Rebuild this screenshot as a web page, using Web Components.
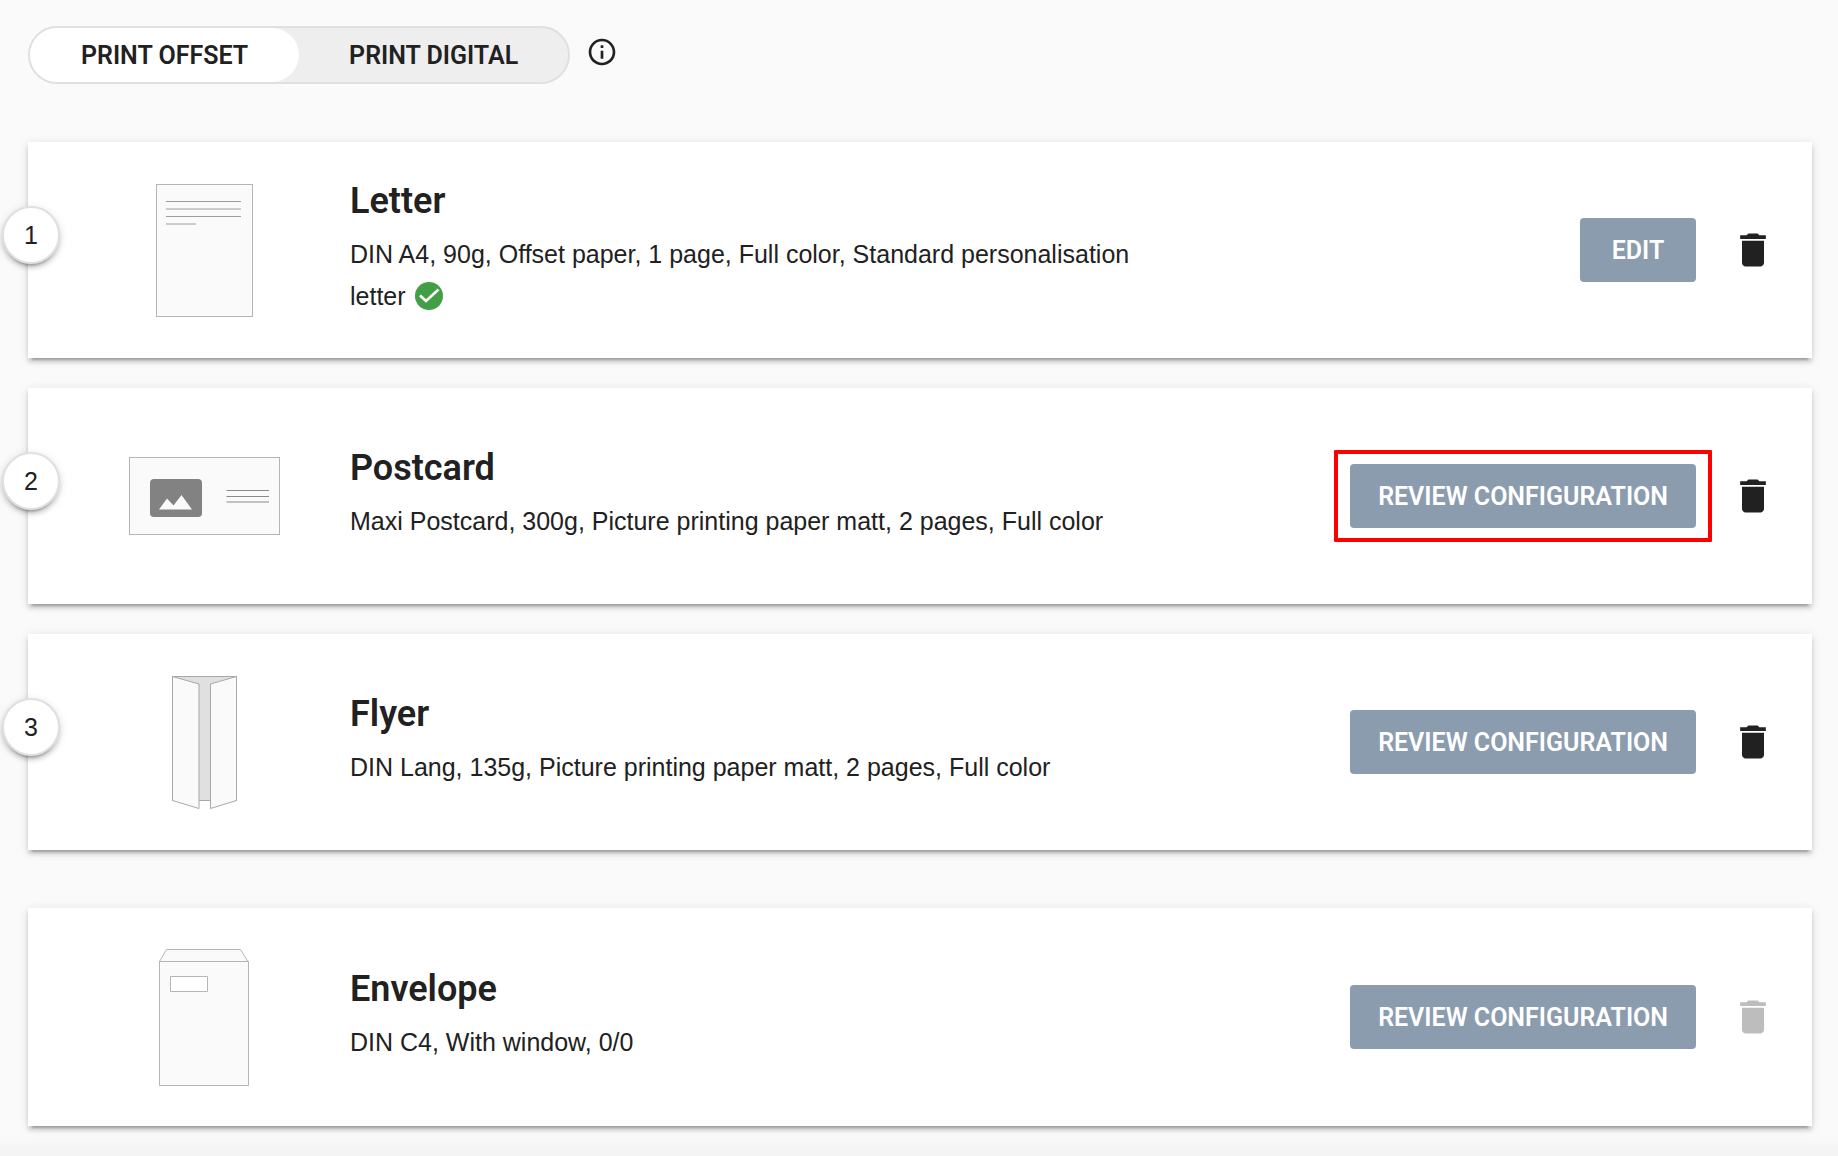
<!DOCTYPE html>
<html lang="en">
	<head>
		<meta charset="utf-8">
		<title>Print products</title>
		<style>
			body {
				margin: 0;
				background: #fafafa;
				color: #212121;
				font-family: "Liberation Sans", Arial, sans-serif;
				font-size: 25px;
			}
		</style>
	</head>
<body>
	<print-page>
		<print-mode slot="header"></print-mode>
		<product-card number="1" kind="letter" action="Edit">
			<span slot="name">Letter</span>
			DIN A4, 90g, Offset paper, 1 page, Full color, Standard personalisation letter <check-mark></check-mark>
		</product-card>
		<product-card number="2" kind="postcard" action="Review configuration" highlight>
			<span slot="name">Postcard</span>
			Maxi Postcard, 300g, Picture printing paper matt, 2 pages, Full color
		</product-card>
		<product-card number="3" kind="flyer" action="Review configuration">
			<span slot="name">Flyer</span>
			DIN Lang, 135g, Picture printing paper matt, 2 pages, Full color
		</product-card>
		<product-card slot="extra" kind="envelope" action="Review configuration" locked>
			<span slot="name">Envelope</span>
			DIN C4, With window, 0/0
		</product-card>
	</print-page>

	<template id="page">
		<style>
			:host {
				display: flex;
				flex-direction: column;
				box-sizing: border-box;
				min-height: 100vh;
			}

			main {
				flex: 1;
				padding: 26px 26px 0 28px;
			}

			.list {
				display: grid;
				gap: 30px;
				margin: 58px 0;
			}

			footer {
				height: 20px;
				background: linear-gradient(#fafafa, #f2f2f2);
			}
		</style>
		<main>
			<slot name="header"></slot>
			<div class="list"><slot></slot></div>
			<slot name="extra"></slot>
		</main>
		<footer></footer>
	</template>

	<template id="mode">
		<style>
			:host {
				display: flex;
				align-items: center;
				gap: 16px;
			}

			.switch {
				display: grid;
				grid-template-columns: 1fr 1fr;
				border: 2px solid #e0e0e0;
				border-radius: 29px;
				background: #eee;
			}

			button {
				border: 0;
				background: none;
				color: inherit;
				cursor: pointer;
			}

			.switch button {
				height: 54px;
				padding: 0 50px;
				border-radius: 27px;
				font: 600 25px Roboto, sans-serif;
				text-transform: uppercase;
			}

			.switch [aria-pressed="true"] {
				background: #fff;
			}

			.info {
				padding: 0 0 6px;
			}

			svg {
				display: block;
				width: 32px;
				height: 32px;
				fill: currentColor;
			}
		</style>
		<div class="switch">
			<button type="button" aria-pressed="true">Print offset</button>
			<button type="button" aria-pressed="false">Print digital</button>
		</div>
		<button type="button" class="info" aria-label="Information">
			<svg viewBox="0 0 24 24"><path d="M11 7h2v2h-2zm0 4h2v6h-2zm1-9C6.48 2 2 6.48 2 12s4.480 10 10 10 10-4.480 10-10S17.520 2 12 2zm0 18c-4.410 0-8-3.590-8-8s3.590-8 8-8 8 3.590 8 8-3.590 8-8 8z"/></svg>
		</button>
	</template>

	<template id="check">
		<style>
			:host {
				display: inline-block;
				margin-left: 2px;
				vertical-align: text-bottom;
			}

			svg {
				display: block;
				width: 28px;
				height: 28px;
			}
		</style>
		<svg viewBox="0 0 28 28">
			<circle cx="14" cy="14" r="14" fill="#439f46"/>
			<path d="M5 13.500l6 5.500L23.500 7.500" fill="none" stroke="#fff" stroke-width="2.600"/>
		</svg>
	</template>

	<template id="card">
		<style>
			:host {
				position: relative;
				display: grid;
				grid-template-columns: 322px 45% 1fr;
				align-items: center;
				box-sizing: border-box;
				min-height: 216px;
				padding-right: 37px;
				background: #fff;
				box-shadow: 0 6px 2px -4px rgba(0, 0, 0, .2), 0 4px 4px rgba(0, 0, 0, .14), 0 2px 10px rgba(0, 0, 0, .12);
			}

			:host([locked]) {
				min-height: 218px;
			}

			/* sits on the left edge of the card */
			.number {
				position: absolute;
				top: 64px;
				left: -26px;
				box-sizing: border-box;
				width: 58px;
				height: 58px;
				border: 2px solid #e0e0e0;
				border-radius: 50%;
				background: #fff;
				box-shadow: 0 6px 2px -4px rgba(0, 0, 0, .2), 0 4px 4px rgba(0, 0, 0, .14), 0 2px 10px rgba(0, 0, 0, .12);
				line-height: 54px;
				text-align: center;
			}

			.number:empty {
				display: none;
			}

			product-picture {
				padding-left: 30px;
			}

			h2 {
				margin: 0 0 14px;
				font: 600 36px/36px Roboto, sans-serif;
			}

			p {
				margin: 0;
				line-height: 42px;
			}

			.actions {
				display: flex;
				align-items: center;
				justify-content: flex-end;
				gap: 35px;
			}

			button {
				border: 0;
				cursor: pointer;
			}

			.main {
				position: relative;
				min-width: 116px;
				height: 64px;
				padding: 0 28px;
				border-radius: 4px;
				background: #8c9caf;
				color: #fff;
				font: 600 25px Roboto, sans-serif;
				text-transform: uppercase;
				white-space: nowrap;
			}

			:host([highlight]) .main::after {
				content: "";
				position: absolute;
				inset: -14px -16px;
				border: 4px solid #f00;
				border-radius: 1px;
			}

			.delete {
				padding: 0;
				background: none;
				color: inherit;
			}

			.delete:disabled {
				color: #bdbdbd;
				cursor: default;
			}

			.delete svg {
				display: block;
				width: 44px;
				height: 44px;
				fill: currentColor;
			}
		</style>
		<span class="number"></span>
		<product-picture></product-picture>
		<div>
			<h2><slot name="name"></slot></h2>
			<p><slot></slot></p>
		</div>
		<div class="actions">
			<button type="button" class="main"></button>
			<button type="button" class="delete" aria-label="Delete">
				<svg viewBox="0 0 24 24"><path d="M6 19c0 1.100.9 2 2 2h8c1.100 0 2-.9 2-2V7H6v12zM19 4h-3.500l-1-1h-5l-1 1H5v2h14V4z"/></svg>
			</button>
		</div>
	</template>

	<script>
		const PICTURES = {
			letter: `<svg width="97" height="133" stroke="#b5b5b5">
				<rect x=".5" y=".5" width="96" height="132" fill="#fafafa"/>
				<path d="M10 17.500h75M10 25h75M10 32.500h75M10 40h30" stroke="#9e9e9e"/>
			</svg>`,
			postcard: `<svg width="151" height="78">
				<rect x=".5" y=".5" width="150" height="77" fill="#fafafa" stroke="#b5b5b5"/>
				<rect x="21" y="22" width="52" height="38" rx="4" fill="#828282"/>
				<path d="M30 52.500l8-11 6.500 7 8-10.500L63 52.500z" fill="#fafafa"/>
				<path d="M97.500 33.500H140M97.500 39.500H140M97.500 45H140" stroke="#8a8a8a"/>
			</svg>`,
			flyer: `<svg width="67" height="134" stroke="#a8a8a8" fill="#fafafa">
				<path d="M1.500 1.500h64v124h-64z" fill="#e0e0e0"/>
				<path d="M28.500 126h10.500v8H28.500z" fill="#fff" stroke="none"/>
				<path d="M1.500 1.500l26.500 7.500v124.500L1.500 125.500zM65.500 1.500L39.500 9v124.500l26-8z"/>
			</svg>`,
			envelope: `<svg width="90" height="137" stroke="#b5b5b5" fill="#fafafa">
				<path d="M.5 12.500L7.500.5h74l7.500 12z"/>
				<path d="M.5 12.500h89v124H.5z"/>
				<path d="M11.500 27.500h37v15h-37z" fill="#fff"/>
			</svg>`
		};

		function stamp(element, id) {
			const root = element.attachShadow({ mode: 'open' });
			root.appendChild(document.importNode(document.querySelector(id).content, true));
			return root;
		}

		customElements.define('print-page', class extends HTMLElement {
			constructor() {
				super();
				stamp(this, '#page');
			}
		});

		customElements.define('print-mode', class extends HTMLElement {
			constructor() {
				super();
				const buttons = stamp(this, '#mode').querySelectorAll('.switch button');
				buttons.forEach(button => button.addEventListener('click', () => {
					buttons.forEach(b => b.setAttribute('aria-pressed', b === button));
				}));
			}
		});

		customElements.define('check-mark', class extends HTMLElement {
			constructor() {
				super();
				stamp(this, '#check');
			}
		});

		customElements.define('product-picture', class extends HTMLElement {
			static get observedAttributes() {
				return ['kind'];
			}

			constructor() {
				super();
				this.attachShadow({ mode: 'open' });
			}

			attributeChangedCallback(name, old, kind) {
				this.shadowRoot.innerHTML = `
					<style>
						:host { display: flex; justify-content: center; }
					</style>
					${PICTURES[kind] || ''}`;
			}
		});

		customElements.define('product-card', class extends HTMLElement {
			constructor() {
				super();
				const root = stamp(this, '#card');
				root.querySelector('.number').textContent = this.getAttribute('number') || '';
				root.querySelector('product-picture').setAttribute('kind', this.getAttribute('kind'));
				root.querySelector('.main').textContent = this.getAttribute('action');
				root.querySelector('.delete').disabled = this.hasAttribute('locked');
			}
		});
	</script>
</body>
</html>
